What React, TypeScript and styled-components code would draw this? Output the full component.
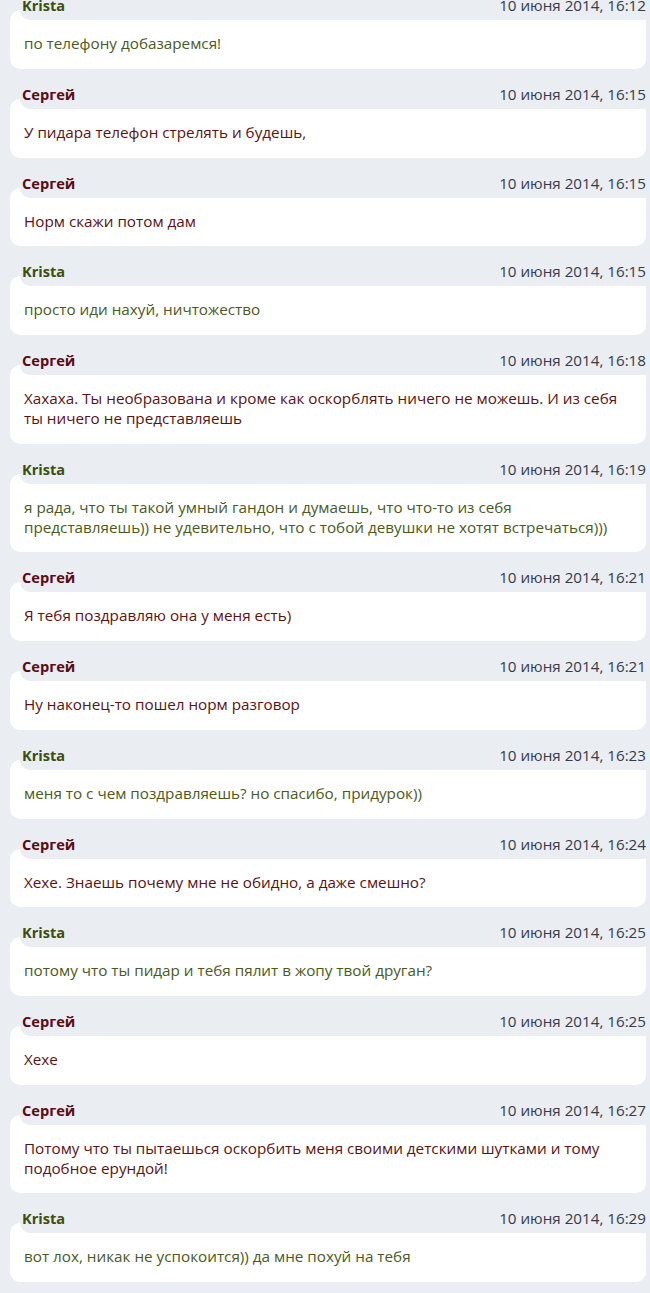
import * as React from "react"
import styled, { createGlobalStyle } from "styled-components"

const GlobalStyle = createGlobalStyle`
  html, body {
    margin: 0;
    padding: 0;
    background: #eaedf2;
  }
  body {
    font-family: "Open Sans", "Noto Sans", sans-serif;
    overflow: hidden;
  }
`

type Author = "krista" | "sergey"

const palette: Record<Author, { name: string; text: string }> = {
    krista: { name: "#3b4e10", text: "#4a5a1c" },
    sergey: { name: "#5c0a14", text: "#5a1212" },
}

const Feed = styled.div`
  margin-top: -9.7px;
  display: flex;
  flex-direction: column;
  gap: 10px;
`

const Message = styled.div`
  display: flex;
  flex-direction: column;
`

// the header sits over the top edge of the card, its rounded corner cuts into it
const Header = styled.div`
  position: relative;
  z-index: 1;
  height: 30px;
  margin-left: 20px;
  padding: 0 4px 0 2px;
  display: flex;
  align-items: center;
  justify-content: space-between;
  background: #eaedf2;
  border-bottom-left-radius: 10px;
`

const Name = styled.span<{ $author: Author }>`
  font-size: 14.6px;
  font-weight: 700;
  color: ${p => palette[p.$author].name};
`

const Stamp = styled.span`
  font-size: 15.2px;
  color: #343b4b;
`

const Card = styled.div<{ $author: Author }>`
  margin: -10px 4px 0 10px;
  padding: 23px 22px 15.7px 14px;
  background: #ffffff;
  border-radius: 10px;
  font-size: 15.25px;
  line-height: 20px;
  color: ${p => palette[p.$author].text};
`

type Item = { author: Author; time: string; text: string }

const items: Item[] = [
    { author: "krista", time: "16:12", text: "по телефону добазаремся!" },
    { author: "sergey", time: "16:15", text: "У пидара телефон стрелять и будешь," },
    { author: "sergey", time: "16:15", text: "Норм скажи потом дам" },
    { author: "krista", time: "16:15", text: "просто иди нахуй, ничтожество" },
    { author: "sergey", time: "16:18", text: "Хахаха. Ты необразована и кроме как оскорблять ничего не можешь. И из себя ты ничего не представляешь" },
    { author: "krista", time: "16:19", text: "я рада, что ты такой умный гандон и думаешь, что что-то из себя представляешь)) не удевительно, что с тобой девушки не хотят встречаться)))" },
    { author: "sergey", time: "16:21", text: "Я тебя поздравляю она у меня есть)" },
    { author: "sergey", time: "16:21", text: "Ну наконец-то пошел норм разговор" },
    { author: "krista", time: "16:23", text: "меня то с чем поздравляешь? но спасибо, придурок))" },
    { author: "sergey", time: "16:24", text: "Хехе. Знаешь почему мне не обидно, а даже смешно?" },
    { author: "krista", time: "16:25", text: "потому что ты пидар и тебя пялит в жопу твой друган?" },
    { author: "sergey", time: "16:25", text: "Хехе" },
    { author: "sergey", time: "16:27", text: "Потому что ты пытаешься оскорбить меня своими детскими шутками и тому подобное ерундой!" },
    { author: "krista", time: "16:29", text: "вот лох, никак не успокоится)) да мне похуй на тебя" },
]

const names: Record<Author, string> = { krista: "Krista", sergey: "Сергей" }

export default function App() {
    return (
        <>
            <GlobalStyle />
            <Feed>
                {items.map((item, i) => (
                    <Message key={i}>
                        <Header>
                            <Name $author={item.author}>{names[item.author]}</Name>
                            <Stamp>10 июня 2014, {item.time}</Stamp>
                        </Header>
                        <Card $author={item.author}>{item.text}</Card>
                    </Message>
                ))}
            </Feed>
        </>
    )
}
